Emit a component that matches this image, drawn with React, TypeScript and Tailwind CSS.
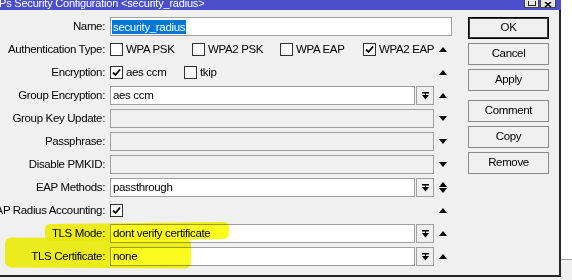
import React from "react";

type ArrowKind = "up" | "down" | "both" | "none";

const Up = () => (
  <svg width="8" height="5" viewBox="0 0 8 5">
    <path d="M0 5 L4 0 L8 5 Z" fill="#000" />
  </svg>
);

const Down = () => (
  <svg width="8" height="5" viewBox="0 0 8 5">
    <path d="M0 0 L8 0 L4 5 Z" fill="#000" />
  </svg>
);

const ArrowSlot = ({ kind }: { kind: ArrowKind }) => (
  <div className="w-[18px] h-full flex flex-col items-center justify-center gap-[1px] shrink-0">
    {(kind === "up" || kind === "both") && <Up />}
    {(kind === "down" || kind === "both") && <Down />}
  </div>
);

const DropBtn = () => (
  <div className="ml-[1px] w-[18px] h-full border border-[#a0a0a0] bg-[#f0f0f0] flex items-center justify-center shrink-0">
    <svg width="7" height="8" viewBox="0 0 7 8">
      <rect x="0" y="0" width="7" height="1.5" fill="#000" />
      <rect x="3" y="1" width="1" height="2" fill="#000" />
      <path d="M0 3 L7 3 L3.5 7.5 Z" fill="#000" />
    </svg>
  </div>
);

const Check = ({ checked }: { checked?: boolean }) => (
  <div className="w-[13px] h-[13px] border border-[#333] bg-white flex items-center justify-center shrink-0">
    {checked && (
      <svg width="9" height="9" viewBox="0 0 9 9">
        <path d="M1 4.5 L3.5 7 L8 1.5" stroke="#000" strokeWidth="1.8" fill="none" />
      </svg>
    )}
  </div>
);

const CheckItem = ({ label, checked, w }: { label: string; checked?: boolean; w: string }) => (
  <div className={`${w} flex items-center gap-[3px] shrink-0 whitespace-nowrap`}>
    <Check checked={checked} />
    <span>{label}</span>
  </div>
);

const Input = ({ value, disabled }: { value?: string; disabled?: boolean }) => (
  <div
    className={`flex-1 h-full border border-[#a0a0a0] flex items-center pl-[2px] whitespace-nowrap ${
      disabled ? "bg-[#f0f0f0]" : "bg-white"
    }`}
  >
    {value}
  </div>
);

const Row = ({ label, children }: { label: string; children: React.ReactNode }) => (
  <div className="flex h-[19px] items-center">
    <div className="w-[105px] flex justify-end whitespace-nowrap shrink-0">{label}</div>
    <div className="ml-[5px] w-[342px] h-full flex items-center">{children}</div>
  </div>
);

const Btn = ({ label, primary, className = "" }: { label: string; primary?: boolean; className?: string }) => (
  <div
    className={`w-[81px] h-[22px] flex items-center justify-center bg-[#f0f0f0] ${
      primary ? "border border-black shadow-[inset_0_0_0_1px_#3a3a3a]" : "border border-[#8a8a8a]"
    } ${className}`}
  >
    {label}
  </div>
);

export default function App() {
  return (
    <div
      className="relative w-[572px] h-[280px] overflow-hidden bg-[#f0f0f0] flex text-[11.5px] tracking-[-0.35px] text-black"
      style={{ fontFamily: '"Liberation Sans", Arial, sans-serif' }}
    >
      {/* dialog window */}
      <div className="w-[561px] h-[277px] flex flex-col shrink-0">
        <div className="h-[10px] bg-[#4b4fc9] flex overflow-hidden shrink-0">
          <div className="-ml-[1px] -mt-[3px] leading-[12px] text-[11px] tracking-[-0.2px] text-white whitespace-nowrap">
            Ps Security Configuration &lt;security_radius&gt;
          </div>
          <div className="ml-auto mr-[5px] flex gap-[1px]">
            <div className="w-[15px] h-[8px] bg-[#e6e6e6] border border-[#444] border-t-0 flex items-end justify-center pb-[1px]">
              <div className="w-[8px] h-[5px] border border-[#222] border-t-0" />
            </div>
            <div className="w-[16px] h-[8px] bg-[#e6e6e6] border border-[#444] border-t-0 flex items-end justify-center">
              <svg width="8" height="5" viewBox="0 0 8 5">
                <path d="M1 0 L4 2.5 L7 0 M4 2.5 L1 5 M4 2.5 L7 5" stroke="#000" strokeWidth="1.6" fill="none" />
              </svg>
            </div>
          </div>
        </div>

        <div className="flex-1 flex border-r-2 border-b-2 border-[#262626] pt-[7px]">
          <div className="flex flex-col gap-[4px]">
            <Row label="Name:">
              <div className="w-full h-full border border-[#a0a0a0] bg-white flex items-center pl-[1px]">
                <span className="bg-[#0078d7] text-white px-[1px] leading-[14px]">security_radius</span>
              </div>
            </Row>
            <Row label="Authentication Type:">
              <div className="flex-1 flex items-center">
                <CheckItem label="WPA PSK" w="w-[82px]" />
                <CheckItem label="WPA2 PSK" w="w-[88px]" />
                <CheckItem label="WPA EAP" w="w-[83px]" />
                <CheckItem label="WPA2 EAP" w="flex-1" checked />
              </div>
              <ArrowSlot kind="up" />
            </Row>
            <Row label="Encryption:">
              <div className="flex-1 flex items-center">
                <CheckItem label="aes ccm" w="w-[74px]" checked />
                <CheckItem label="tkip" w="w-[40px]" />
              </div>
              <ArrowSlot kind="up" />
            </Row>
            <Row label="Group Encryption:">
              <Input value="aes ccm" />
              <DropBtn />
              <ArrowSlot kind="up" />
            </Row>
            <Row label="Group Key Update:">
              <Input disabled />
              <ArrowSlot kind="down" />
            </Row>
            <Row label="Passphrase:">
              <Input disabled />
              <ArrowSlot kind="down" />
            </Row>
            <Row label="Disable PMKID:">
              <Input disabled />
              <ArrowSlot kind="down" />
            </Row>
            <Row label="EAP Methods:">
              <Input value="passthrough" />
              <DropBtn />
              <ArrowSlot kind="both" />
            </Row>
            <Row label="EAP Radius Accounting:">
              <div className="flex-1 flex items-center">
                <Check checked />
              </div>
              <ArrowSlot kind="up" />
            </Row>
            <Row label="TLS Mode:">
              <Input value="dont verify certificate" />
              <DropBtn />
              <ArrowSlot kind="up" />
            </Row>
            <Row label="TLS Certificate:">
              <Input value="none" />
              <DropBtn />
              <ArrowSlot kind="up" />
            </Row>
          </div>

          <div className="ml-[16px] flex flex-col">
            <Btn label="OK" primary />
            <Btn label="Cancel" className="mt-[4px]" />
            <Btn label="Apply" className="mt-[4px]" />
            <Btn label="Comment" className="mt-[9px]" />
            <Btn label="Copy" className="mt-[4px]" />
            <Btn label="Remove" className="mt-[4px]" />
          </div>
        </div>
      </div>

      {/* background beyond the window */}
      <div className="flex-1 flex flex-col">
        <div className="flex-1 bg-white" />
        <div className="h-[21px] border-t border-[#a0a0a0] bg-[#f0f0f0]" />
      </div>

      {/* highlighter marks */}
      <div className="pointer-events-none absolute left-[45px] top-[223px] w-[184px] h-[17px] rounded-[5px] -rotate-[0.6deg] bg-[#fbfb1e] mix-blend-multiply" />
      <div className="pointer-events-none absolute left-[5px] top-[238px] w-[186px] h-[30px] rounded-[6px] rotate-[0.4deg] bg-[#fbfb1e] mix-blend-multiply" />
    </div>
  );
}
